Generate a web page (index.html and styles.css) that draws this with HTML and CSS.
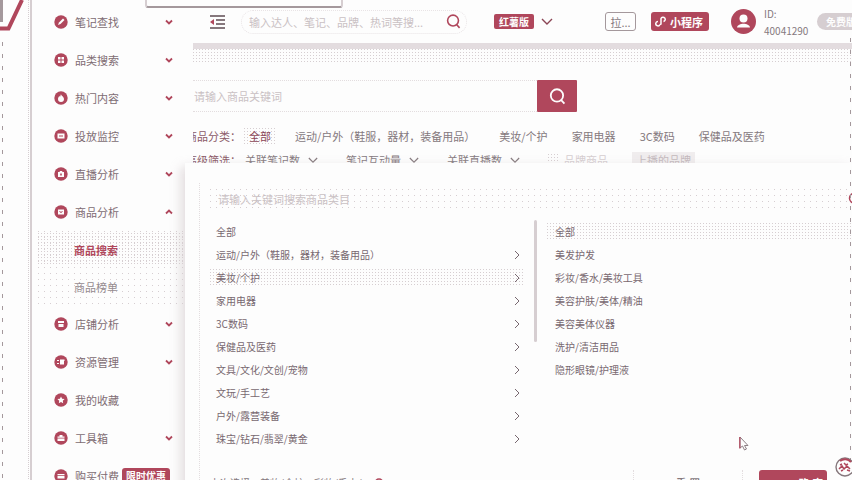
FILE: index.html
```
<!DOCTYPE html>
<html lang="zh-CN">
<head>
<meta charset="utf-8">
<title>商品搜索</title>
<link rel="stylesheet" href="styles.css">
</head>
<body>
<svg width="0" height="0" class="defs" aria-hidden="true">
  <symbol id="down" viewBox="0 0 8 6"><path d="M1 1.500l3 3 3-3" fill="none" stroke="currentColor" stroke-width="1.800"/></symbol>
  <symbol id="up" viewBox="0 0 8 6"><path d="M1 4.500l3-3 3 3" fill="none" stroke="currentColor" stroke-width="1.800"/></symbol>
  <symbol id="thin" viewBox="0 0 12 8"><path d="M1 1l5 5 5-5" fill="none" stroke="currentColor" stroke-width="1.400"/></symbol>
  <symbol id="right" viewBox="0 0 6 10"><path d="M1 1l4 4-4 4" fill="none" stroke="currentColor"/></symbol>
  <symbol id="search" viewBox="0 0 16 16"><circle cx="7.500" cy="7" r="5.800" fill="none" stroke="currentColor" stroke-width="1.700"/><path d="M11.500 11.500l3 3.300" stroke="currentColor" stroke-width="1.700"/></symbol>
</svg>
<div class="app">
  <div class="frame">
    <svg class="corner" width="26" height="32" viewBox="0 0 26 32"><path d="M0 0h3v22H0z" fill="#a4989c"/><path d="M0 28.500h8.500L22 0" fill="none" stroke="#b0475c" stroke-width="4"/></svg>
  </div>
  <nav class="side">
    <a href="#" class="item"><svg class="ic" viewBox="0 0 14 14"><circle cx="7" cy="7" r="6.700"/><path d="M4 10l1-2.500L9 3.500l1.500 1.500L6.500 9z" class="w"/></svg><span>笔记查找</span><svg class="ch"><use href="#down"/></svg></a>
    <a href="#" class="item"><svg class="ic" viewBox="0 0 14 14"><circle cx="7" cy="7" r="6.700"/><path d="M4 4h2.500v2.500H4zM7.500 4H10v2.500H7.500zM4 7.500h2.500V10H4zM7.500 7.500H10V10H7.500z" class="w"/></svg><span>品类搜索</span><svg class="ch"><use href="#down"/></svg></a>
    <a href="#" class="item"><svg class="ic" viewBox="0 0 14 14"><circle cx="7" cy="7" r="6.700"/><path d="M7 3c0 2 3 2.500 3 5a3 3 0 0 1-6 0c0-1.500 1-2 1.200-3.200L6 6z" class="w"/></svg><span>热门内容</span><svg class="ch"><use href="#down"/></svg></a>
    <a href="#" class="item"><svg class="ic" viewBox="0 0 14 14"><circle cx="7" cy="7" r="6.700"/><path d="M3.500 4.500h7v5h-7z" class="w"/><path d="M5 7h4" class="r"/></svg><span>投放监控</span><svg class="ch"><use href="#down"/></svg></a>
    <a href="#" class="item"><svg class="ic" viewBox="0 0 14 14"><circle cx="7" cy="7" r="6.700"/><path d="M4 5h1.500L6 4h2l.5 1H10v5H4z" class="w"/><path d="M6.200 6.500h1.600v2H6.200z"/></svg><span>直播分析</span><svg class="ch"><use href="#down"/></svg></a>
    <a href="#" class="item"><svg class="ic" viewBox="0 0 14 14"><circle cx="7" cy="7" r="6.700"/><path d="M4 4.500h6v5H4z" class="w"/><path d="M5.700 6.200c0 1.600 2.600 1.600 2.600 0" class="r"/></svg><span>商品分析</span><svg class="ch"><use href="#up"/></svg></a>
    <div class="sub">
      <a href="#" class="on">商品搜索</a>
      <a href="#">商品榜单</a>
    </div>
    <a href="#" class="item"><svg class="ic" viewBox="0 0 14 14"><circle cx="7" cy="7" r="6.700"/><path d="M4 4h6v2H4zM4.500 7h5v3h-5z" class="w"/></svg><span>店铺分析</span><svg class="ch"><use href="#down"/></svg></a>
    <a href="#" class="item"><svg class="ic" viewBox="0 0 14 14"><circle cx="7" cy="7" r="6.700"/><path d="M3 5h2v1H3zM3 8h2v1H3zM6 4.500h4.500V6H10v3.500H6z" class="w"/></svg><span>资源管理</span><svg class="ch"><use href="#down"/></svg></a>
    <a href="#" class="item"><svg class="ic" viewBox="0 0 14 14"><circle cx="7" cy="7" r="6.700"/><path d="M7 3.500l1.100 2.300 2.500.3-1.800 1.700.4 2.500L7 9.100l-2.200 1.200.4-2.500-1.800-1.700 2.500-.3z" class="w"/></svg><span>我的收藏</span></a>
    <a href="#" class="item"><svg class="ic" viewBox="0 0 14 14"><circle cx="7" cy="7" r="6.700"/><path d="M3.500 7.500h7V10h-7zM3.500 5.500h2V4h3v1.500h2v1.200h-7z" class="w"/></svg><span>工具箱</span><svg class="ch"><use href="#down"/></svg></a>
    <a href="#" class="item"><svg class="ic" viewBox="0 0 14 14"><circle cx="7" cy="7" r="6.700"/><path d="M3.500 5h7v1.200h-7zM3.500 7h7v2.500h-7z" class="w"/></svg><span>购买付费</span><b class="promo">限时优惠</b></a>
  </nav>
  <main class="main">
    <header class="top">
      <button class="fold" aria-label="收起菜单"><svg width="15" height="14" viewBox="0 0 15 14"><path d="M0 1h15M6 5h9M6 9h9M0 13h15" stroke="#5f4c53" stroke-width="1.400"/><path d="M0 7l4-3v6z" fill="#b0475c"/></svg></button>
      <label class="find"><input type="text" aria-label="搜索" placeholder="输入达人、笔记、品牌、热词等搜..."><svg width="15" height="15"><use href="#search"/></svg></label>
      <b class="ver">红薯版</b>
      <svg class="verch" width="12" height="8"><use href="#thin"/></svg>
      <button class="pull">拉...</button>
      <button class="mini"><svg width="13" height="13" viewBox="0 0 13 13"><path d="M5 9.500a2.200 2.200 0 1 1-2-3M6 9.500v-6a2.200 2.200 0 1 1 2.500 3M5 9.500c.6 0 1-.4 1-1" fill="none" stroke="#fdfdfd" stroke-width="1.500"/></svg>小程序</button>
      <svg class="avatar" width="25" height="25" viewBox="0 0 25 25"><circle cx="12.500" cy="12.500" r="12.500" fill="#b0475c"/><circle cx="12.500" cy="9.500" r="4" fill="#fdfdfd"/><path d="M6 18.500c1-5 12-5 13 0z" fill="#fdfdfd"/></svg>
      <span class="uid">ID:<br>40041290</span>
      <b class="free">免费版</b>
    </header>
    <div class="fade"></div>
    <section class="query">
      <form class="ask"><input type="text" aria-label="商品关键词" placeholder="请输入商品关键词"><button type="button" aria-label="搜索商品"><svg width="17" height="17"><use href="#search"/></svg></button></form>
      <div class="cats"><span class="lab">商品分类：</span><a href="#" class="on">全部</a><a href="#">运动/户外（鞋服，器材，装备用品）</a><a href="#">美妆/个护</a><a href="#">家用电器</a><a href="#">3C数码</a><a href="#">保健品及医药</a></div>
      <div class="adv"><span class="lab">高级筛选：</span><button>关联笔记数<svg width="10" height="7"><use href="#thin"/></svg></button><button>笔记互动量<svg width="10" height="7"><use href="#thin"/></svg></button><button>关联直播数<svg width="10" height="7"><use href="#thin"/></svg></button><label><input type="checkbox">品牌商品</label><span class="tag">上播的品牌</span></div>
    </section>
  </main>
  <div class="notch"></div>
  <section class="panel">
    <div class="inner">
      <label class="pfind"><input type="text" aria-label="商品类目" placeholder="请输入关键词搜索商品类目"><svg width="14" height="14"><use href="#search"/></svg></label>
      <div class="cols">
        <ul class="list">
          <li>全部</li>
          <li>运动/户外（鞋服，器材，装备用品）<svg><use href="#right"/></svg></li>
          <li class="on">美妆/个护<svg><use href="#right"/></svg></li>
          <li>家用电器<svg><use href="#right"/></svg></li>
          <li>3C数码<svg><use href="#right"/></svg></li>
          <li>保健品及医药<svg><use href="#right"/></svg></li>
          <li>文具/文化/文创/宠物<svg><use href="#right"/></svg></li>
          <li>文玩/手工艺<svg><use href="#right"/></svg></li>
          <li>户外/露营装备<svg><use href="#right"/></svg></li>
          <li>珠宝/钻石/翡翠/黄金<svg><use href="#right"/></svg></li>
        </ul>
        <i class="bar"></i>
        <ul class="list second">
          <li class="on">全部</li>
          <li>美发护发</li>
          <li>彩妆/香水/美妆工具</li>
          <li>美容护肤/美体/精油</li>
          <li>美容美体仪器</li>
          <li>洗护/清洁用品</li>
          <li>隐形眼镜/护理液</li>
        </ul>
      </div>
      <footer class="foot"><p>上次选择：美妆/个护，彩妆/香水/...<svg width="10" height="10" viewBox="0 0 10 10"><circle cx="5" cy="5" r="4" fill="none" stroke="#b0475c" stroke-width="1.500"/></svg></p><button class="reset">重 置</button><button class="ok">确 定</button></footer>
    </div>
  </section>
  <div class="edge"></div>
  <svg class="cursor" width="10" height="15" viewBox="0 0 10 15"><path d="M1 1v11l2.500-2 2 4 2-1-2-3.500H9z" fill="#fdfdfd" stroke="#8d8085"/><path d="M.8 1v11.500" stroke="#b0475c" stroke-width="1.200"/></svg>
  <svg class="float" width="20" height="20" viewBox="0 0 20 20"><circle cx="10" cy="10" r="9" fill="#fdfdfd" stroke="#85777c" stroke-width="1.400"/><path d="M5 4a8 8 0 0 1 11 1" fill="none" stroke="#b0475c" stroke-width="2"/><path d="M5 8l2-1M9 6l2 2 2-1M4 12l3-3 2 3 3-3 3 3M6 14l2-1M12 13l3 1" fill="none" stroke="#b0475c" stroke-width="1.500"/></svg>
</div>
</body>
</html>
```
FILE: styles.css
```
:root {
  --red: #b0475c;
  --gray: #85797d;
  --soft: #d6ced1;
  --bg: #fdfdfd;
  --dots: conic-gradient(from 270deg at 1px 1px, var(--soft) 90deg, transparent 0);
}
* { box-sizing: border-box; }
body {
  margin: 0;
  background: var(--bg);
  color: var(--gray);
  font: 11px/16px "Noto Sans CJK SC", "Noto Sans", sans-serif;
}
a { color: inherit; text-decoration: none; }
button, input { font: inherit; color: inherit; border: 0; background: none; padding: 0; margin: 0; }
input { outline: 0; min-width: 0; }
input::placeholder { color: #cac1c4; opacity: 1; }
ul, p { margin: 0; padding: 0; list-style: none; }
.defs { position: absolute; }
.app {
  position: relative;
  display: grid;
  grid-template-columns: 32px 161px minmax(0, 1fr);
  height: 100vh;
  overflow: hidden;
}

.frame {
  border-right: 2px solid var(--soft);
  background:
    linear-gradient(var(--bg), var(--bg)) 0 0 / 8px 40px no-repeat,
    repeating-linear-gradient(#a4989c 0 4px, transparent 4px 12px) 2px 6px / 1px 100% repeat-y,
    var(--dots) 28px 0 / 2px 2px repeat-y;
}
.corner { display: block; }

.side { padding-top: 3px; color: #806c73; border-left: 2px solid var(--bg); }
.item { display: flex; align-items: center; height: 38px; padding: 0 20px; }
.item span { margin-left: 7px; flex: 1; white-space: nowrap; }
.ic { width: 14px; height: 14px; fill: var(--red); flex: none; }
.ic .w { fill: var(--bg); }
.ic .r { fill: none; stroke: var(--red); }
.ch { width: 8px; height: 6px; color: var(--red); }
.promo {
  background: var(--red);
  color: var(--bg);
  border-radius: 3px;
  padding: 0 4px;
  margin-right: 3px;
  white-space: nowrap;
  font-size: 10px;
}
.sub { margin-left: 4px; padding-top: 2px; background: var(--dots) 0 0 / 6px 6px; }
.sub a { display: flex; align-items: center; height: 36px; padding-left: 36px; color: #958b8f; }
.sub .on { font-weight: 700; color: var(--red); background: var(--dots) 0 0 / 3px 3px; height: 33px; margin-bottom: 3px; }

.main { overflow: hidden; }
.top { display: flex; align-items: center; height: 43px; padding-left: 17px; }
.top > * { flex: none; }
.fold { display: flex; }
.find {
  display: flex;
  align-items: center;
  width: 226px;
  height: 24px;
  margin-left: 16px;
  padding: 0 5px 0 7px;
  border: 1px dotted #e9e4e6;
  border-radius: 12px;
}
.find input { flex: 1; }
.find svg { color: var(--red); }
.ver { margin-left: 27px; padding: 0 5px; background: var(--red); color: var(--bg); border-radius: 2px; font-size: 10px; line-height: 15px; }
.verch { margin-left: 7px; color: #8b4555; }
.pull { margin-left: 52px; width: 31px; height: 19px; border: 1px solid #a4989c; border-radius: 3px; line-height: 16px; }
.mini {
  display: flex;
  align-items: center;
  gap: 2px;
  margin-left: 15px;
  padding: 0 6px 0 4px;
  height: 19px;
  border-radius: 3px;
  background: var(--red);
  color: var(--bg);
  font-weight: 700;
}
.avatar { margin-left: 22px; }
.uid { width: 53px; margin-left: 8px; font-size: 10px; line-height: 17px; }
.free { padding: 0 9px; border-radius: 9px; background: var(--soft); color: var(--bg); font-size: 10px; line-height: 17px; }
.fade {
  height: 21px;
  background: linear-gradient(#e3dcdf 0 6px, transparent 6px), var(--dots) 0 0 / 3px 3px;
}

.query { padding-top: 16px; white-space: nowrap; }
.ask { display: flex; width: 384px; height: 32px; }
.ask input { flex: 1; padding-left: 1px; border: 1px dotted #e3dddf; border-width: 1px 0; }
.ask button { display: grid; place-items: center; width: 40px; background: var(--red); color: var(--bg); border-radius: 1px; }
.cats, .adv { display: flex; align-items: center; margin-left: -7px; }
.cats { margin-top: 16px; gap: 14px; }
.cats a { padding: 0 5px; }
.cats .lab { margin-right: -11px; }
.lab { color: #8b5a67; }
.cats .on { color: #8b4555; background: var(--dots) 0 0 / 3px 3px; }
.adv { margin-top: 8px; gap: 28px; }
.adv .lab { margin-right: -24px; }
.adv button { display: flex; align-items: center; gap: 8px; }
.adv label { display: flex; align-items: center; gap: 4px; color: var(--soft); }
.adv input { appearance: none; width: 12px; height: 12px; background: var(--dots) 0 0 / 3px 3px; }
.tag { padding: 0 4px; color: #c4b9bd; background: #f0edee; margin-left: -4px; }

.notch {
  position: absolute;
  left: 145px;
  top: -6px;
  width: 198px;
  height: 14px;
  border: 2px solid var(--soft);
  border-bottom-color: #a4989c;
  border-radius: 3px;
  background: var(--bg);
}

.panel {
  position: absolute;
  left: 185px;
  right: 0;
  top: 163px;
  padding: 20px 0 0 14px;
  background: var(--bg);
  box-shadow: -4px 4px 10px #d6ced1b0;
  font-size: 10px;
}
.inner { padding: 6px 0 0 10px; border-left: 1px dotted #e3dddf; }
.pfind { display: flex; align-items: center; height: 20px; font-size: 11px; background: var(--dots) 0 0 / 6px 6px; }
.pfind input { flex: 1; padding-left: 8px; }
.pfind svg { color: var(--red); margin-right: -10px; }
.cols { display: grid; grid-template-columns: 314px 3px minmax(0, 1fr); gap: 10px; margin-top: 14px; }
.list { display: flex; flex-direction: column; gap: 5px; color: #786870; }
.list li { display: flex; align-items: center; justify-content: space-between; height: 18px; padding: 0 4px 0 6px; white-space: nowrap; }
.list.second li { padding-left: 8px; }
.list svg { width: 6px; height: 10px; }
.list .on { background: var(--dots) 0 0 / 3px 3px; }
.bar { height: 122px; margin-top: -3px; background: var(--soft); border-radius: 2px; }
.foot { display: flex; align-items: center; margin-top: 22px; padding-right: 25px; white-space: nowrap; }
.foot p { flex: 1; display: flex; align-items: center; gap: 4px; }
.foot button { height: 26px; font-size: 11px; font-weight: 700; }
.reset { width: 110px; border: 1px dotted #e3dddf; border-width: 0 1px; }
.ok { width: 68px; margin-left: 16px; padding-left: 36px; background: var(--red); color: var(--bg); border-radius: 3px 3px 0 0; }

.edge {
  position: absolute;
  right: 1px;
  top: 38px;
  bottom: 0;
  width: 1px;
  background: repeating-linear-gradient(#a4989c 0 4px, transparent 4px 12px);
}
.cursor { position: absolute; left: 739px; top: 436px; }
.float { position: absolute; right: -3px; top: 457px; }
```
